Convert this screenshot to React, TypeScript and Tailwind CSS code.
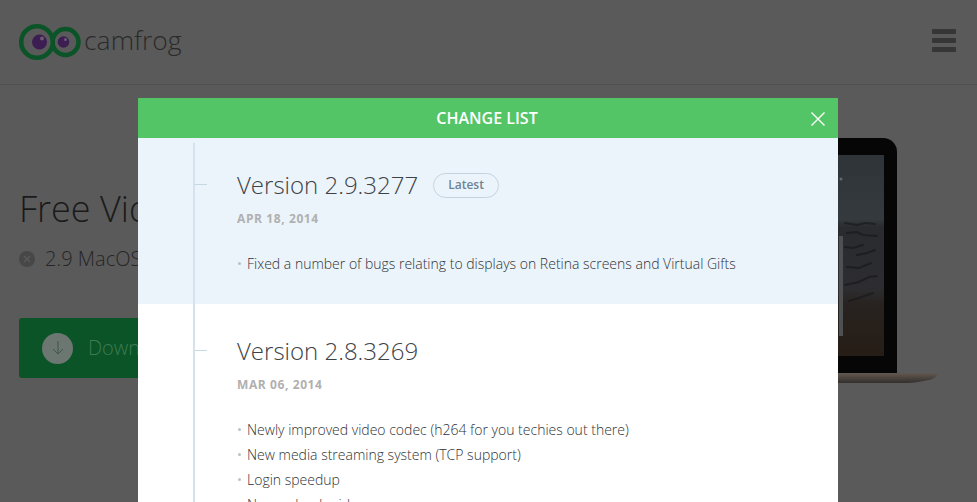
import React from "react";

const font = { fontFamily: '"Open Sans", sans-serif' };

function Logo() {
  return (
    <svg width="62" height="38" viewBox="0 0 62 38" className="shrink-0">
      <circle cx="46.5" cy="19" r="13" fill="#5a5a5a" stroke="#0a5427" strokeWidth="4.5" />
      <circle cx="18" cy="19" r="15.8" fill="#5a5a5a" stroke="#0a5427" strokeWidth="4.5" />
      <circle cx="20.5" cy="19" r="7.5" fill="#3c1e52" />
      <circle cx="23" cy="15.5" r="2" fill="#6a5c74" />
      <circle cx="44.5" cy="19" r="5.8" fill="#3c1e52" />
      <circle cx="46.5" cy="16.5" r="1.5" fill="#6a5c74" />
    </svg>
  );
}

function Laptop() {
  return (
    <div className="flex flex-col items-end">
      <div className="w-[140px] h-[235px] mr-[40px] bg-[#060606] rounded-tr-[14px] pt-[17px] pr-[13px] pb-[17px]">
        <svg className="block w-full h-full" viewBox="0 0 127 201" preserveAspectRatio="none">
          <defs>
            <linearGradient id="screen" x1="0" y1="0" x2="0" y2="1">
              <stop offset="0" stopColor="#2f3438" />
              <stop offset="0.32" stopColor="#343a3d" />
              <stop offset="0.36" stopColor="#2a2b2e" />
              <stop offset="0.66" stopColor="#2d2d31" />
              <stop offset="0.74" stopColor="#282320" />
              <stop offset="1" stopColor="#261d16" />
            </linearGradient>
          </defs>
          <rect width="127" height="201" fill="url(#screen)" />
          <g stroke="#18181b" strokeWidth="2" strokeLinecap="round" fill="none" opacity="0.65">
            <path d="M88 68l12 2 8-2 10 1" />
            <path d="M90 78l10-1 6 3 14 1" />
            <path d="M88 92l8 1 10-3" />
            <path d="M100 100l10-2 8-3" />
            <path d="M90 112l12 1 12-5" />
            <path d="M88 130l14-3 10-5 8-1" />
            <path d="M92 146l10-3 14-5" />
          </g>
          <rect x="82" y="81" width="4" height="100" fill="#4e5052" />
          <circle cx="84" cy="24" r="1.5" fill="#64696e" />
        </svg>
      </div>
      <div className="w-[180px] h-[10px] bg-[linear-gradient(180deg,#625850,#34302c)] rounded-tr-[2px] rounded-br-[40px_9px]" />
    </div>
  );
}

function Release({
  version,
  date,
  items,
  latest,
}: {
  version: string;
  date: string;
  items: string[];
  latest?: boolean;
}) {
  return (
    <section className={`relative pl-[99px] pt-[29px] pb-[27px] ${latest ? "bg-[#ecf4fb] h-[166px]" : "bg-white"}`}>
      <span className="absolute left-[55px] top-[46px] w-[14px] h-px bg-[#c8d8e3]" />
      <div className="flex items-center gap-[15px]">
        <h2 className="text-[24px] leading-[35px] font-light text-[#3d4247]">{version}</h2>
        {latest && (
          <span className="mt-px w-[66px] h-[25px] rounded-full border border-[#c4d4df] flex items-center justify-center text-[12px] font-semibold text-[#6f8291]">
            Latest
          </span>
        )}
      </div>
      <p className="mt-[9px] text-[12px] leading-[16px] font-bold tracking-[0.6px] text-[#b0b0b0]">{date}</p>
      <ul className="mt-[24px]">
        {items.map((t) => (
          <li key={t} className="flex items-center h-[25px] text-[14px] font-light text-[#2e3336]">
            <span className="w-[3px] h-[3px] rounded-full bg-[#b9c2c8] ml-px mr-[6px]" />
            {t}
          </li>
        ))}
      </ul>
    </section>
  );
}

export default function App() {
  return (
    <div style={font} className="relative w-[977px] h-[502px] overflow-hidden bg-[#5a5a5a]">
      <header className="h-[85px] border-b border-[#505050] flex items-center justify-between pl-[19px] pr-[21px]">
        <div className="flex items-center gap-[3px] pb-px">
          <Logo />
          <span className="text-[26.5px] font-light leading-none text-[#2a2a2a] pb-[2px]">camfrog</span>
        </div>
        <div className="flex flex-col gap-[4px] pb-[3px]">
          <span className="block w-[24px] h-[5px] rounded-[1px] bg-[#363636]" />
          <span className="block w-[24px] h-[5px] rounded-[1px] bg-[#363636]" />
          <span className="block w-[24px] h-[5px] rounded-[1px] bg-[#363636]" />
        </div>
      </header>

      <main className="flex justify-between pt-[53px] pl-[19px] pr-[40px]">
        <div className="pt-[46px]">
          <h1 className="text-[36px] leading-[50px] font-light text-[#1a1a1a] whitespace-nowrap">Free Video</h1>
          <div className="mt-[11px] flex items-center gap-[10px]">
            <span className="w-[16px] h-[16px] rounded-full bg-[#474747] flex items-center justify-center text-[#5a5a5a]">
              <svg width="8" height="8" viewBox="0 0 8 8">
                <path d="M1 1l6 6M7 1L1 7" stroke="currentColor" strokeWidth="1.4" />
              </svg>
            </span>
            <span className="text-[20px] leading-[28px] font-light text-[#262626] whitespace-nowrap">2.9 MacOS</span>
          </div>
          <div className="mt-[45px] w-[240px] h-[60px] rounded-[3px] bg-[#0a5427] flex items-center pl-[23px] gap-[15px]">
            <span className="w-[31px] h-[31px] rounded-full bg-[#6d7771] flex items-center justify-center">
              <svg width="14" height="16" viewBox="0 0 14 16" fill="none" stroke="#3a5846" strokeWidth="1">
                <path d="M7 1v13M2 9l5 5 5-5" />
              </svg>
            </span>
            <span className="text-[20px] font-light text-[#3f7a53] whitespace-nowrap">Download</span>
          </div>
        </div>
        <Laptop />
      </main>

      <div className="absolute left-[138px] top-[98px] w-[700px] h-[404px] overflow-hidden bg-white">
        <div className="relative h-[40px] pr-[2px] bg-[#54c566] flex items-center justify-center text-white text-[16px] font-semibold">
          CHANGE LIST
          <svg className="absolute right-[12px] top-[13px]" width="16" height="16" viewBox="0 0 16 16" stroke="#fff" strokeWidth="1.4">
            <path d="M1.5 1.5l13 13M14.5 1.5l-13 13" />
          </svg>
        </div>
        <div className="relative">
          <Release
            latest
            version="Version 2.9.3277"
            date="APR 18, 2014"
            items={["Fixed a number of bugs relating to displays on Retina screens and Virtual Gifts"]}
          />
          <Release
            version="Version 2.8.3269"
            date="MAR 06, 2014"
            items={[
              "Newly improved video codec (h264 for you techies out there)",
              "New media streaming system (TCP support)",
              "Login speedup",
              "New upload grid",
            ]}
          />
          <span className="absolute left-[55px] top-[5px] bottom-0 w-[2px] bg-[#d3e2ec]" />
        </div>
      </div>
    </div>
  );
}
